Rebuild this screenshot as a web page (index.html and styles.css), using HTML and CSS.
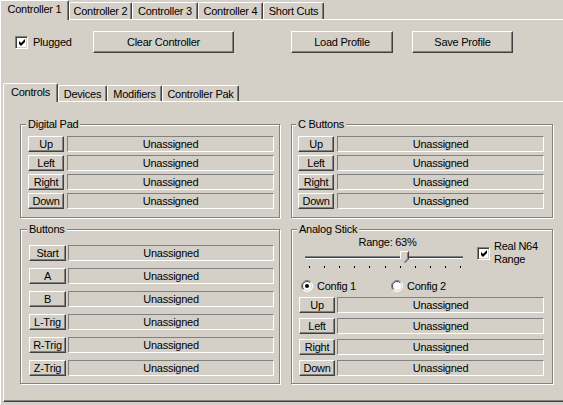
FILE: index.html
```html
<!DOCTYPE html>
<html>
<head>
<meta charset="utf-8">
<link rel="stylesheet" href="styles.css">
</head>
<body>
<div class="window">
  <div class="tabstrip outer-tabs">
    <div class="tab active w-c1">Controller 1</div>
    <div class="tab w-c2">Controller 2</div>
    <div class="tab w-c3">Controller 3</div>
    <div class="tab w-c4">Controller 4</div>
    <div class="tab w-sc">Short Cuts</div>
  </div>
  <div class="page">
    <div class="toprow">
      <div class="plugged">
        <span class="cb"><svg width="7" height="7" viewBox="0 0 7 7"><polygon points="0,2 2,4 6,0 6,3 2,7 0,5" fill="#000"/></svg></span>
        <span>Plugged</span>
      </div>
      <div class="btn btn-clear">Clear Controller</div>
      <div class="btn btn-load">Load Profile</div>
      <div class="btn btn-save">Save Profile</div>
    </div>
    <div class="inner">
      <div class="tabstrip inner-tabs">
        <div class="tab active w-ctl">Controls</div>
        <div class="tab w-dev">Devices</div>
        <div class="tab w-mod">Modifiers</div>
        <div class="tab w-pak">Controller Pak</div>
      </div>
      <div class="panel">
        <div class="groups">
          <fieldset class="group g-dpad">
            <legend>Digital Pad</legend>
            <div class="rows rows-tight">
              <div class="row"><div class="btn key">Up</div><div class="field">Unassigned</div></div>
              <div class="row"><div class="btn key">Left</div><div class="field">Unassigned</div></div>
              <div class="row"><div class="btn key">Right</div><div class="field">Unassigned</div></div>
              <div class="row"><div class="btn key">Down</div><div class="field">Unassigned</div></div>
            </div>
          </fieldset>
          <fieldset class="group g-cbtn">
            <legend>C Buttons</legend>
            <div class="rows rows-tight">
              <div class="row"><div class="btn key">Up</div><div class="field">Unassigned</div></div>
              <div class="row"><div class="btn key">Left</div><div class="field">Unassigned</div></div>
              <div class="row"><div class="btn key">Right</div><div class="field">Unassigned</div></div>
              <div class="row"><div class="btn key">Down</div><div class="field">Unassigned</div></div>
            </div>
          </fieldset>
          <fieldset class="group g-btns">
            <legend>Buttons</legend>
            <div class="rows rows-wide">
              <div class="row"><div class="btn key key-w">Start</div><div class="field">Unassigned</div></div>
              <div class="row"><div class="btn key key-w">A</div><div class="field">Unassigned</div></div>
              <div class="row"><div class="btn key key-w">B</div><div class="field">Unassigned</div></div>
              <div class="row"><div class="btn key key-w">L-Trig</div><div class="field">Unassigned</div></div>
              <div class="row"><div class="btn key key-w">R-Trig</div><div class="field">Unassigned</div></div>
              <div class="row"><div class="btn key key-w">Z-Trig</div><div class="field">Unassigned</div></div>
            </div>
          </fieldset>
          <fieldset class="group g-analog">
            <legend>Analog Stick</legend>
            <div class="analog-top">
              <div class="slider-col">
                <div class="range-label">Range: 63%</div>
                <svg class="slider" width="170" height="22" viewBox="0 0 170 22" shape-rendering="crispEdges">
                  <rect x="6" y="7" width="158" height="1" fill="#808080"/>
                  <rect x="6" y="8" width="158" height="1" fill="#404040"/>
                  <rect x="6" y="9" width="158" height="1" fill="#ffffff"/>
                  <g fill="#000">
                    <rect x="10" y="17" width="1" height="2"/>
                    <rect x="25" y="17" width="1" height="2"/>
                    <rect x="40" y="17" width="1" height="2"/>
                    <rect x="55" y="17" width="1" height="2"/>
                    <rect x="70" y="17" width="1" height="2"/>
                    <rect x="86" y="17" width="1" height="2"/>
                    <rect x="101" y="17" width="1" height="2"/>
                    <rect x="116" y="17" width="1" height="2"/>
                    <rect x="131" y="17" width="1" height="2"/>
                    <rect x="146" y="17" width="1" height="2"/>
                    <rect x="161" y="17" width="1" height="2"/>
                  </g>
                  <polygon points="101,2 110,2 110,10 105.5,14.5 101,10" fill="#d4d0c8" shape-rendering="auto"/>
                  <polyline points="101.5,10 101.5,2.5 109.5,2.5" fill="none" stroke="#fff" shape-rendering="auto"/>
                  <polyline points="109.5,2.5 109.5,10 105.5,14" fill="none" stroke="#404040" shape-rendering="auto"/>
                  <polyline points="108.5,3.5 108.5,9.5 105.5,12.8" fill="none" stroke="#808080" shape-rendering="auto"/>
                </svg>
              </div>
              <div class="n64">
                <span class="cb"><svg width="7" height="7" viewBox="0 0 7 7"><polygon points="0,2 2,4 6,0 6,3 2,7 0,5" fill="#000"/></svg></span>
                <span class="n64-text">Real N64<br>Range</span>
              </div>
            </div>
            <div class="radio-row">
              <div class="radio-opt">
                <svg width="12" height="12" viewBox="0 0 12 12">
                  <circle cx="6" cy="6" r="5.5" fill="#fff"/>
                  <path d="M2.1,9.9 A5.5,5.5 0 0 1 9.9,2.1" fill="none" stroke="#808080"/>
                  <path d="M9.9,2.1 A5.5,5.5 0 0 1 2.1,9.9" fill="none" stroke="#fff"/>
                  <path d="M2.8,9.2 A4.5,4.5 0 0 1 9.2,2.8" fill="none" stroke="#404040"/>
                  <path d="M9.2,2.8 A4.5,4.5 0 0 1 2.8,9.2" fill="none" stroke="#d4d0c8"/>
                  <circle cx="6" cy="6" r="2" fill="#000"/>
                </svg>
                <span>Config 1</span>
              </div>
              <div class="radio-opt">
                <svg width="12" height="12" viewBox="0 0 12 12">
                  <circle cx="6" cy="6" r="5.5" fill="#fff"/>
                  <path d="M2.1,9.9 A5.5,5.5 0 0 1 9.9,2.1" fill="none" stroke="#808080"/>
                  <path d="M9.9,2.1 A5.5,5.5 0 0 1 2.1,9.9" fill="none" stroke="#fff"/>
                  <path d="M2.8,9.2 A4.5,4.5 0 0 1 9.2,2.8" fill="none" stroke="#404040"/>
                  <path d="M9.2,2.8 A4.5,4.5 0 0 1 2.8,9.2" fill="none" stroke="#d4d0c8"/>
                </svg>
                <span>Config 2</span>
              </div>
            </div>
            <div class="rows rows-analog">
              <div class="row"><div class="btn key key-a">Up</div><div class="field">Unassigned</div></div>
              <div class="row"><div class="btn key key-a">Left</div><div class="field">Unassigned</div></div>
              <div class="row"><div class="btn key key-a">Right</div><div class="field">Unassigned</div></div>
              <div class="row"><div class="btn key key-a">Down</div><div class="field">Unassigned</div></div>
            </div>
          </fieldset>
        </div>
      </div>
    </div>
  </div>
</div>
</body>
</html>
```
FILE: styles.css
```css
* { box-sizing: border-box; }
html, body { margin: 0; padding: 0; }
body {
  background: #d4d0c8;
  font-family: "Liberation Sans", Arial, sans-serif;
  font-size: 11px;
  letter-spacing: -0.25px;
  color: #000;
  width: 563px;
  height: 405px;
  overflow: hidden;
}
.window { width: 580px; }

/* tabs */
.tabstrip { display: flex; align-items: flex-end; position: relative; z-index: 1; }
.outer-tabs { height: 19px; }
.tab {
  height: 17px;
  border-left: 1px solid #fff;
  border-top: 1px solid #fff;
  border-right: 1px solid #404040;
  box-shadow: inset -1px 0 0 #808080;
  border-radius: 2px 2px 0 0;
  display: flex;
  align-items: center;
  justify-content: center;
  line-height: 13px;
  padding-top: 1px;
  white-space: nowrap;
}
.tab.active {
  height: 20px;
  margin-bottom: -1px;
  background: #d4d0c8;
  padding-top: 0;
  padding-bottom: 2px;
}
.w-c1 { width: 69px; }
.w-c2 { width: 63px; }
.w-c3 { width: 66px; }
.w-c4 { width: 65px; }
.w-sc { width: 61px; }

.inner-tabs { height: 18px; }
.inner-tabs .tab { height: 16px; }
.inner-tabs .tab.active { height: 19px; padding-bottom: 1px; }
.w-ctl { width: 55px; }
.w-dev { width: 49px; }
.w-mod { width: 55px; }
.w-pak { width: 77px; }

/* page */
.page {
  border-top: 1px solid #fff;
  border-left: 1px solid #fff;
  height: 386px;
}
.toprow {
  display: flex;
  align-items: center;
  height: 22px;
  margin-top: 11px;
  padding-left: 14px;
}
.plugged { width: 78px; display: flex; align-items: center; gap: 5px; }

.cb {
  width: 13px;
  height: 13px;
  flex: none;
  background: #fff;
  border: 1px solid;
  border-color: #808080 #fff #fff #808080;
  box-shadow: inset 1px 1px 0 #404040, inset -1px -1px 0 #d4d0c8;
  display: flex;
  align-items: center;
  justify-content: center;
}
.cb svg { display: block; margin: 1px 0 0 1px; }

.btn {
  background: #d4d0c8;
  border: 1px solid;
  border-color: #fff #404040 #404040 #fff;
  box-shadow: inset -1px -1px 0 #808080;
  display: flex;
  align-items: center;
  justify-content: center;
  white-space: nowrap;
  line-height: 13px;
}
.btn-clear { width: 141px; height: 22px; }
.btn-load { width: 102px; height: 22px; margin-left: 57px; }
.btn-save { width: 101px; height: 22px; margin-left: 19px; }

/* inner tab control */
.inner { margin: 30px 0 0 2px; }
.panel {
  height: 301px;
  border-top: 1px solid #fff;
  border-left: 1px solid #fff;
  border-bottom: 1px solid #404040;
  box-shadow: inset 0 -1px 0 #808080;
  padding: 16px 0 0 16px;
}
.groups {
  display: grid;
  grid-template-columns: 260px 262px;
  grid-template-rows: 100px 161px;
  column-gap: 11px;
  row-gap: 5px;
}
.group {
  margin: 0;
  min-width: 0;
  border: 1px solid #808080;
  box-shadow: inset 1px 1px 0 #fff, 1px 1px 0 #fff;
}
.group legend {
  padding: 0 2px;
  margin-left: -2px;
  line-height: 13px;
  background: #d4d0c8;
}
.g-dpad { padding: 5px 5px 0 7px; }
.g-cbtn { padding: 5px 8px 0 6px; }
.g-btns { padding: 9px 5px 0 8px; }
.g-analog { padding: 0 8px 0 7px; }

.rows { display: flex; flex-direction: column; }
.rows-tight { gap: 3px; }
.rows-wide { gap: 7px; }
.rows-analog { gap: 5px; margin-top: 4px; }
.row { display: flex; height: 16px; }
.key { width: 36px; margin-right: 3px; flex: none; }
.key-w { width: 37px; margin-right: 2px; }
.key-a { margin-right: 2px; }
.field {
  flex: 1;
  border: 1px solid;
  border-color: #808080 #fff #fff #808080;
  display: flex;
  align-items: center;
  justify-content: center;
  line-height: 13px;
}

/* analog */
.analog-top { display: flex; }
.slider-col { width: 170px; display: flex; flex-direction: column; }
.range-label { line-height: 13px; text-align: center; padding-left: 7px; }
.slider { display: block; }
.n64 {
  display: flex;
  align-items: center;
  gap: 4px;
  margin: 4px 0 0 8px;
  height: 26px;
  line-height: 13px;
}
.radio-row {
  display: flex;
  align-items: center;
  height: 14px;
  margin-top: 8px;
  padding-left: 2px;
}
.radio-opt { display: flex; align-items: center; gap: 4px; width: 90px; }
.radio-opt svg { display: block; flex: none; }
```
